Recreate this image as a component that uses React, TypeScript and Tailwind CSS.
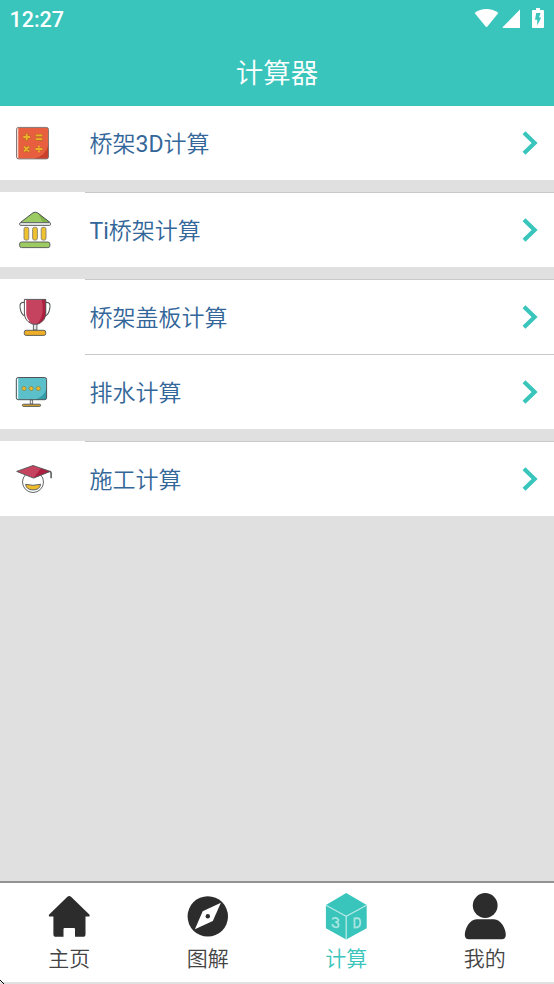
import React from "react";

const OUTLINE = "#505456";

function StatusIcons() {
  return (
    <svg className="h-9 w-[84px]" viewBox="470 0 84 36" fill="#fff">
      <path d="M474.6 13q5-4 11.9-4t11.9 4L487.4 26.600q-.9 1-1.8 0z" />
      <path d="M520 9.600V28h-16.500q-1.600 0-.5-1.200z" />
      <path
        fillRule="evenodd"
        d="M536 8h4v2h3q1 0 1 1v16q0 1-1 1h-10q-1 0-1-1V11q0-1 1-1h3zM536.200 13L535 19.800h2.200v5.600l4-8h-2.200l1.600-4.400z"
      />
    </svg>
  );
}

function CalculatorIcon() {
  return (
    <svg className="h-[74px] w-[85px] shrink-0" viewBox="0 106 85 74" fill="none">
      <rect x="16.6" y="127.5" width="31.8" height="31.3" rx="2" fill="#e85f40" />
      <path d="M48.4 145v12q0 1.8-2 1.8H33.5Q45 157 48.4 145z" fill="#c9412b" />
      <path d="M17.6 128v30" stroke="#f3d9d2" strokeWidth="1.4" />
      <rect x="16.5" y="127.4" width="32" height="31.5" rx="2" stroke="#77706f" strokeWidth=".9" />
      <g stroke="#b66b22" strokeWidth="3">
        <path d="M22.800 137h7.800M26.700 133.200v7.800M35.400 135.400h7.200M35.400 139.200h7.200M24 146.400l5.200 5.200M29.200 146.400l-5.200 5.200M35.200 149h7.400" />
      </g>
      <g stroke="#efb32b" strokeWidth="1.800">
        <path d="M23.300 137H30M26.700 133.700v6.600M35.800 135.400h6.400M35.800 139.200h6.400M24.200 146.600l4.800 4.800M29 146.600l-4.800 4.800M35.500 149h6.800M38.900 145.800v1.600M38.900 150.600v1.600" />
      </g>
    </svg>
  );
}

function BankIcon() {
  return (
    <svg className="h-[75px] w-[85px] shrink-0" viewBox="0 192 85 75" fill="none">
      <path d="M20.3 222.6L33 212.8q2.3-1.3 4.6 0l12.6 9.8z" fill="#9bcb62" />
      <path d="M37.6 212.8l12.6 9.8H43z" fill="#80b44b" />
      <path d="M20.3 222.6L33 212.8q2.3-1.3 4.6 0l12.6 9.8" stroke={OUTLINE} />
      <rect x="19.6" y="222.6" width="31" height="2.8" rx="1.2" fill="#e9ecea" stroke={OUTLINE} strokeWidth=".9" />
      <g fill="#efc12c" stroke="#86827a" strokeWidth=".9">
        <rect x="24" y="227.3" width="4.8" height="12.8" rx="1.8" />
        <rect x="32.6" y="227.3" width="4.8" height="12.8" rx="1.8" />
        <rect x="41.2" y="227.3" width="4.8" height="12.8" rx="1.8" />
      </g>
      <rect x="19.6" y="242" width="30.3" height="5.6" rx="2" fill="#9bcb62" stroke={OUTLINE} strokeWidth=".9" />
    </svg>
  );
}

function TrophyIcon() {
  return (
    <svg className="h-[75px] w-[85px] shrink-0" viewBox="0 279 85 75" fill="none">
      <path
        d="M24.5 302.500c-4-.8-5.200 1.800-4.300 6 .7 3.800 1.600 7 4.900 7.300M45.500 302.500c4-.8 5.200 1.800 4.300 6-.7 3.800-1.600 7-4.900 7.300"
        stroke={OUTLINE}
        strokeWidth="1.1"
      />
      <path d="M24.4 299.4h21.4V313q0 7-6.2 10.3l-3 1.2h-3l-3-1.2Q24.4 320 24.4 313z" fill="#c5435e" />
      <path d="M41.500 299.400h4.300V313q0 7-6.200 10.300l-3 1.200q5-5 6-13 .4-8-1.100-12.100z" fill="#ad1f40" />
      <path d="M25.500 300v13q0 5 3.400 8.400" stroke="#fff" strokeWidth="1.400" />
      <path d="M24.4 299.4h21.4V313q0 7-6.2 10.3l-3 1.2h-3l-3-1.2Q24.4 320 24.4 313z" stroke={OUTLINE} strokeWidth=".9" />
      <path d="M33.4 324.3h3.5v5.7h-3.5z" fill="#e6e6e6" stroke={OUTLINE} strokeWidth=".9" />
      <rect x="24.3" y="330.3" width="21.4" height="5.1" rx="1.8" fill="#efae27" stroke={OUTLINE} strokeWidth=".9" />
    </svg>
  );
}

function MonitorIcon() {
  return (
    <svg className="h-[75px] w-[85px] shrink-0" viewBox="0 354 85 75" fill="none">
      <rect x="16.3" y="377.5" width="30.3" height="22.2" rx="2" fill="#5bc0c9" />
      <path d="M46.6 388v9.8q0 1.9-2 1.9H34.5Q44.5 397 46.6 388z" fill="#339ca8" />
      <path d="M17.5 378v21" stroke="#e9f5f6" strokeWidth="1.5" />
      <rect x="16.3" y="377.5" width="30.3" height="22.2" rx="2" stroke={OUTLINE} />
      <g fill="#efb72b" stroke="#7f8a57" strokeWidth=".8">
        <circle cx="24" cy="388.5" r="2.1" />
        <circle cx="31.2" cy="388.5" r="2.1" />
        <circle cx="38.3" cy="388.5" r="2.1" />
      </g>
      <path d="M30.3 400h2.3v4h-2.3z" fill="#eee" stroke={OUTLINE} strokeWidth=".8" />
      <rect x="22.4" y="404.2" width="18.2" height="2.2" rx="1" fill="#d6a12f" stroke={OUTLINE} strokeWidth=".9" />
    </svg>
  );
}

function GraduateIcon() {
  return (
    <svg className="h-[75px] w-[85px] shrink-0" viewBox="0 441 85 75" fill="none">
      <circle cx="33" cy="482" r="10.5" fill="#fff" stroke={OUTLINE} strokeWidth=".9" />
      <path d="M25.600 484.300q7.400 2 15 0-.8 5.600-7.500 5.600t-7.500-5.600z" fill="#efbc2c" stroke={OUTLINE} strokeWidth=".9" />
      <path d="M16.7 471.4L33 465.5l17.3 5.9-16.8 6.7z" fill="#c5435e" />
      <path d="M41 468.2l9.3 3.2-16.8 6.7z" fill="#ad1f40" />
      <path d="M16.7 471.4L33 465.5l17.3 5.9-16.8 6.7z" stroke={OUTLINE} strokeWidth=".9" />
      <path d="M50 471.4q1.1.2 1.1 1.7v5.2" stroke={OUTLINE} strokeWidth="1.5" />
    </svg>
  );
}

function Chevron() {
  return (
    <svg className="mr-4 h-6 w-4 shrink-0" viewBox="0 0 16 24" fill="none">
      <path d="M2 1.800L12.600 12L2 22.200" stroke="#39c5bb" strokeWidth="4.200" />
    </svg>
  );
}

type RowProps = { icon: React.ReactNode; label: React.ReactNode; first?: boolean };

function Row({ icon, label, first }: RowProps) {
  return (
    <button className={`flex w-full items-stretch bg-white text-left ${first ? "h-[74px]" : "h-[75px]"}`}>
      {icon}
      <span
        className={`flex flex-1 items-center justify-between pl-[4.5px] ${first ? "" : "border-t border-[#c8c8c8]"}`}
      >
        <span className="pt-1 text-[23px] leading-[34px] font-[350] text-[#336699]">{label}</span>
        <Chevron />
      </span>
    </button>
  );
}

function HomeIcon() {
  return (
    <svg className="h-12 w-12" viewBox="45 892 48 48" fill="#2c2c2c">
      <path d="M67.4 896.7q1.8-1.6 3.6 0l18.3 17.7q1.2 2-1 2.2h-2.8v17.6q0 2.6-2.6 2.6H75V929q0-1-1-1H64.500q-1 0-1 1v7.800H56q-2.600 0-2.600-2.600v-17.600H50.300q-2.400-.2-1.100-2.200z" />
    </svg>
  );
}

function CompassIcon() {
  return (
    <svg className="h-12 w-12" viewBox="184 892 48 48">
      <circle cx="207.800" cy="916.400" r="20.200" fill="#2c2c2c" />
      <path d="M220.900 902.800L202.700 911.300L194.900 929.300L212.800 920.900z" fill="#fff" />
      <circle cx="207.800" cy="916.300" r="2.200" fill="#2c2c2c" />
    </svg>
  );
}

function CubeIcon() {
  return (
    <svg className="h-12 w-12" viewBox="322 892 48 48" fill="none">
      <path d="M346.200 893L366.700 905v23.200L346.200 939.600L325.900 928.200V905z" fill="#39c5bb" />
      <path d="M326 905.200l20.200 11 20.400-11M346.200 916.200v23" stroke="#b5e9e5" strokeWidth="1.300" />
      <g stroke="#a9e5e0" strokeWidth="1.800">
        <path d="M332.400 919.600q.7-2.200 3.200-1.700 3 .7 2.800 2.800-.2 1.500-3 1.200 3.300.7 3.200 3.400-.3 2.500-3.300 1.900-2.800-.7-3-3" />
        <path d="M354.500 918.300v9.200l2.600-.2q3.200-.7 3.200-4.900 0-4.200-3-4.300z" />
      </g>
    </svg>
  );
}

function PersonIcon() {
  return (
    <svg className="h-12 w-12" viewBox="461 892 48 48" fill="#2c2c2c">
      <circle cx="485.200" cy="905.500" r="12.400" />
      <path d="M476.500 919.300h17.500c6.500 0 11.800 9 11.800 15.700 0 2.800-1.600 4.200-4 4.200h-33c-2.400 0-4-1.400-4-4.200 0-6.700 5.200-15.700 11.700-15.700z" />
    </svg>
  );
}

function Tab({ icon, label, active }: { icon: React.ReactNode; label: string; active?: boolean }) {
  return (
    <button className={`flex flex-1 flex-col items-center pt-[9px] ${active ? "text-[#39c5bb]" : "text-[#444444]"}`}>
      {icon}
      <span className="mt-[3px] text-[21px] leading-[32px] font-[350]">{label}</span>
    </button>
  );
}

export default function App() {
  return (
    <div className="flex h-[984px] w-[554px] flex-col overflow-hidden bg-[#e0e0e0] font-[Roboto,'Noto_Sans_CJK_SC',sans-serif]">
      <header className="h-[106px] shrink-0 bg-[#39c5bb] text-white">
        <div className="flex h-9 items-center justify-between pl-[9.5px]">
          <time className="pt-[3px] text-[21.500px] font-medium leading-9">12:27</time>
          <StatusIcons />
        </div>
        <h1 className="pt-[3px] text-center text-[27.500px] leading-[70px] font-[350]">计算器</h1>
      </header>
      <main className="flex flex-1 flex-col gap-3">
        <Row
          first
          icon={<CalculatorIcon />}
          label={
            <>
              桥架<span className="font-normal">3D</span>计算
            </>
          }
        />
        <Row
          icon={<BankIcon />}
          label={
            <>
              <span className="font-normal">Ti</span>桥架计算
            </>
          }
        />
        <section>
          <Row icon={<TrophyIcon />} label="桥架盖板计算" />
          <Row icon={<MonitorIcon />} label="排水计算" />
        </section>
        <Row icon={<GraduateIcon />} label="施工计算" />
      </main>
      <nav className="relative flex h-[103px] shrink-0 border-t-2 border-b-2 border-t-[#929292] border-b-[#e0e0e0] bg-white">
        <Tab icon={<HomeIcon />} label="主页" />
        <Tab icon={<CompassIcon />} label="图解" />
        <Tab active icon={<CubeIcon />} label="计算" />
        <Tab icon={<PersonIcon />} label="我的" />
        <svg className="absolute -bottom-0.5 left-0 h-1 w-1" viewBox="0 0 4 4">
          <path d="M0 0h1v1h1v1h1v1h1v1H3V3H2V2H1V1H0z" fill="#000" />
        </svg>
      </nav>
    </div>
  );
}
